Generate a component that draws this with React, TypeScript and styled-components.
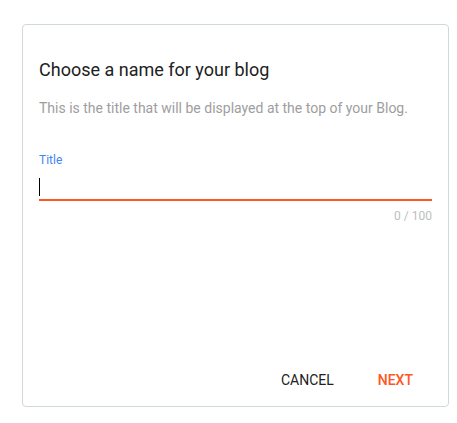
import styled, { createGlobalStyle } from 'styled-components';

const GlobalStyle = createGlobalStyle`
  html, body {
    margin: 0;
    padding: 0;
    background: #fff;
    font-family: Roboto, "Liberation Sans", Arial, sans-serif;
  }
`;

export default function App() {
  return (
    <Page>
      <GlobalStyle />
      <Dialog>
        <Heading>Choose a name for your blog</Heading>
        <Description>This is the title that will be displayed at the top of your Blog.</Description>
        <Label>Title</Label>
        <Field>
          <Caret />
        </Field>
        <Counter>0 / 100</Counter>
        <Actions>
          <Button>Cancel</Button>
          <Button primary>Next</Button>
        </Actions>
      </Dialog>
    </Page>
  );
}

const Page = styled.div`
  padding: 24px 8px 16px 22px;
`;

const Dialog = styled.div`
  box-sizing: border-box;
  width: 427px;
  height: 383px;
  border: 1px solid #cfd8dc;
  border-radius: 4px;
  padding: 33px 16px 8px 16px;
  display: flex;
  flex-direction: column;
`;

const Heading = styled.h2`
  margin: 0;
  font-size: 18px;
  line-height: 24px;
  font-weight: 400;
  color: #212121;
`;

const Description = styled.p`
  margin: 16px 0 0;
  font-size: 14px;
  line-height: 20px;
  color: #9e9e9e;
`;

const Label = styled.label`
  display: block;
  margin-top: 34px;
  font-size: 12px;
  line-height: 16px;
  color: #4285f4;
`;

const Field = styled.div`
  padding: 10px 0 3px;
  border-bottom: 2px solid #ff5722;
  display: flex;
`;

const Caret = styled.span`
  width: 1px;
  height: 18px;
  background: #000;
`;

const Counter = styled.div`
  margin-top: 7px;
  font-size: 12px;
  line-height: 16px;
  text-align: right;
  color: #bdbdbd;
`;

const Actions = styled.div`
  margin-top: auto;
  display: flex;
  justify-content: flex-end;
  gap: 12px;
  padding-right: 3px;
`;

const Button = styled.button<{ primary?: boolean }>`
  height: 36px;
  padding: 0 16px;
  border: none;
  background: transparent;
  font-family: Roboto, "Liberation Sans", Arial, sans-serif;
  font-size: 14px;
  line-height: 36px;
  font-weight: ${(p) => (p.primary ? 500 : 400)};
  text-transform: uppercase;
  color: ${(p) => (p.primary ? '#ff5722' : '#212121')};
  cursor: pointer;
`;
